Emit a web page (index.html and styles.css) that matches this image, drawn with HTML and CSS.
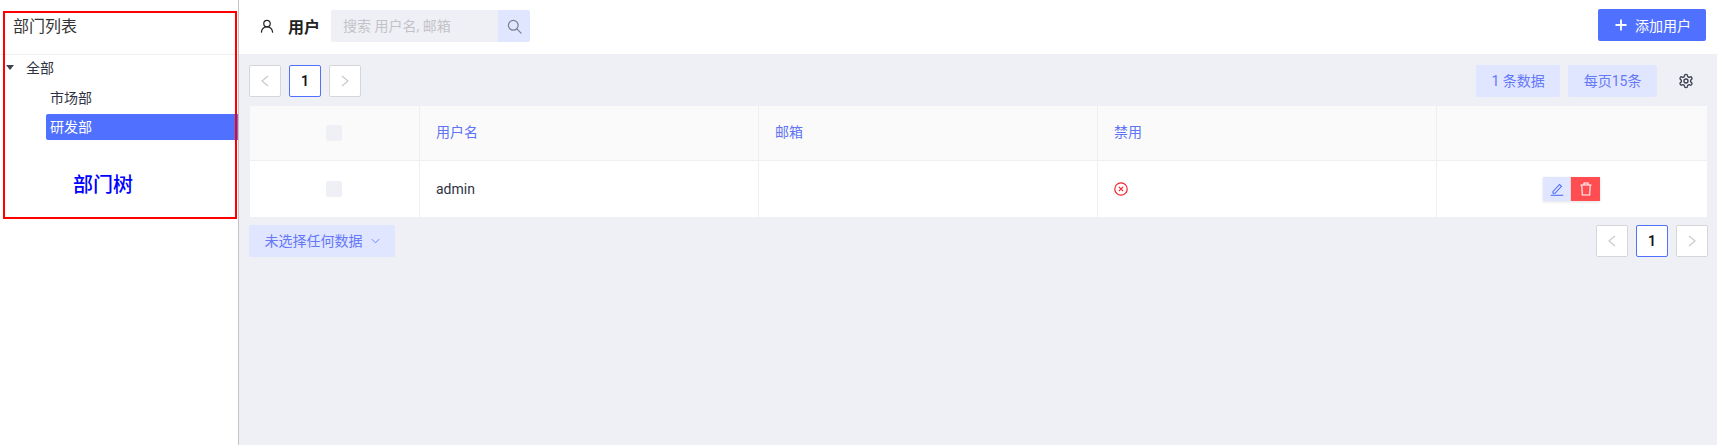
FILE: index.html
```html
<!DOCTYPE html>
<html lang="zh-CN">
<head>
  <meta charset="UTF-8">
  <title>用户</title>
  <link rel="stylesheet" href="styles.css">
</head>
<body>
  <div class="app">
    <aside class="sidebar">
      <div class="sidebar-title">部门列表</div>
      <ul class="tree">
        <li class="tree-root"><span class="tree-caret"></span>全部</li>
        <li class="tree-item">市场部</li>
        <li class="tree-item tree-item-active">研发部</li>
      </ul>
      <!-- annotation drawn on the screenshot -->
      <div class="note-box"><span class="note-text">部门树</span></div>
    </aside>

    <main class="main">
      <header class="topbar">
        <svg class="user-icon" viewBox="0 0 16 16" fill="none" stroke="#222" stroke-width="1.4" stroke-linecap="round">
          <circle cx="8" cy="5.2" r="3.7"/>
          <path d="M1.6 15c.5-3.500 3-5.900 6.400-5.900s5.900 2.400 6.400 5.900"/>
        </svg>
        <span class="page-name">用户</span>
        <div class="search">
          <span class="search-input">搜索 用户名, 邮箱</span>
          <span class="search-btn">
            <svg viewBox="0 0 16 16" width="15" height="15" fill="none" stroke="#7a7f8c" stroke-width="1.3" stroke-linecap="round">
              <circle cx="6.700" cy="6.700" r="5.200"/>
              <path d="M10.500 10.500 15 15"/>
            </svg>
          </span>
        </div>
        <button class="add-btn">
          <svg viewBox="0 0 12 12" width="12" height="12" stroke="#fff" stroke-width="1.800"><path d="M6 .5v11M.5 6h11"/></svg>
          添加用户
        </button>
      </header>

      <section class="content">
        <div class="toolbar">
          <div class="pager">
            <span class="page-btn"><svg viewBox="0 0 10 12" width="10" height="12" class="chev"><path d="M8 1 2 6l6 5"/></svg></span>
            <span class="page-btn page-btn-current">1</span>
            <span class="page-btn"><svg viewBox="0 0 10 12" width="10" height="12" class="chev"><path d="m2 1 6 5-6 5"/></svg></span>
          </div>
          <div class="toolbar-right">
            <span class="tag-btn">1 条数据</span>
            <span class="tag-btn">每页15条</span>
            <svg class="gear" viewBox="0 0 24 24" fill="none" stroke="#3d4152" stroke-width="2">
              <path d="M12.220 2h-.44a2 2 0 0 0-2 2v.18a2 2 0 0 1-1 1.730l-.43.25a2 2 0 0 1-2 0l-.15-.08a2 2 0 0 0-2.730.73l-.22.38a2 2 0 0 0 .73 2.730l.15.1a2 2 0 0 1 1 1.720v.51a2 2 0 0 1-1 1.740l-.15.09a2 2 0 0 0-.73 2.730l.22.38a2 2 0 0 0 2.730.73l.15-.08a2 2 0 0 1 2 0l.43.25a2 2 0 0 1 1 1.730V20a2 2 0 0 0 2 2h.44a2 2 0 0 0 2-2v-.18a2 2 0 0 1 1-1.730l.43-.25a2 2 0 0 1 2 0l.15.08a2 2 0 0 0 2.730-.73l.22-.39a2 2 0 0 0-.73-2.730l-.15-.08a2 2 0 0 1-1-1.740v-.5a2 2 0 0 1 1-1.740l.15-.09a2 2 0 0 0 .73-2.730l-.22-.38a2 2 0 0 0-2.730-.73l-.15.08a2 2 0 0 1-2 0l-.43-.25a2 2 0 0 1-1-1.730V4a2 2 0 0 0-2-2z"/>
              <circle cx="12" cy="12" r="3"/>
            </svg>
          </div>
        </div>

        <table class="data-table">
          <thead>
            <tr>
              <th class="col-check"><span class="checkbox"></span></th>
              <th class="col-mid">用户名</th>
              <th class="col-mid">邮箱</th>
              <th class="col-mid">禁用</th>
              <th></th>
            </tr>
          </thead>
          <tbody>
            <tr>
              <td class="col-check"><span class="checkbox"></span></td>
              <td>admin</td>
              <td></td>
              <td>
                <svg class="status-icon" viewBox="0 0 14 14" fill="none" stroke="#f5222d" stroke-width="1.200">
                  <circle cx="7" cy="7" r="6.200"/>
                  <path d="m4.900 4.900 4.200 4.200M9.100 4.900l-4.200 4.200"/>
                </svg>
              </td>
              <td class="col-actions">
                <span class="action-group">
                  <span class="action-btn action-edit">
                    <svg viewBox="0 0 14 14" width="14" height="14" fill="none" stroke="#4f6ef7" stroke-width="1.100">
                      <path d="M3 9.500 9.500 2.500l2 1.800-6.500 7H3z"/>
                      <path d="M.8 13.300h12.400"/>
                    </svg>
                  </span>
                  <span class="action-btn action-del">
                    <svg viewBox="0 0 14 14" width="14" height="14" fill="none" stroke="#fff" stroke-width="1.100">
                      <path d="M1.500 3h11M5 3V1h4v2M2.800 3l.5 10h7.400l.5-10"/>
                    </svg>
                  </span>
                </span>
              </td>
            </tr>
          </tbody>
        </table>

        <div class="toolbar toolbar-bottom">
          <span class="tag-btn select-btn">未选择任何数据
            <svg viewBox="0 0 10 6" width="9" height="6" fill="none" stroke="#6478f8" stroke-width="1"><path d="m1 1 4 4 4-4"/></svg>
          </span>
          <div class="pager">
            <span class="page-btn"><svg viewBox="0 0 10 12" width="10" height="12" class="chev"><path d="M8 1 2 6l6 5"/></svg></span>
            <span class="page-btn page-btn-current">1</span>
            <span class="page-btn"><svg viewBox="0 0 10 12" width="10" height="12" class="chev"><path d="m2 1 6 5-6 5"/></svg></span>
          </div>
        </div>
      </section>
    </main>
  </div>
</body>
</html>
```

FILE: styles.css
```css
html, body {
  height: 100%;
}
body {
  margin: 0;
  font-family: Roboto, "Noto Sans CJK SC", sans-serif;
  font-size: 14px;
  color: #303344;
  background-color: #fff;
  overflow: hidden;
}
.app {
  display: flex;
  height: 100vh;
}

/* left tree */
.sidebar {
  position: relative;
  width: 238px;
  flex-shrink: 0;
  border-right: 1px solid #c4c4c8;
}
.sidebar-title {
  height: 55px;
  box-sizing: border-box;
  padding: 16px 0 0 13px;
  font-size: 16px;
  line-height: 22px;
  color: #333;
  border-bottom: 1px solid #eeeff2;
}
.tree {
  list-style: none;
  margin: 0;
  padding: 0;
}
.tree-root {
  position: relative;
  height: 27px;
  padding-left: 26px;
  line-height: 26px;
}
.tree-caret {
  position: absolute;
  left: 6px;
  top: 10px;
  border-left: 4px solid transparent;
  border-right: 4px solid transparent;
  border-top: 5px solid #3d4152;
}
.tree-item {
  height: 26px;
  margin: 3px 0 3px 46px;
  padding-left: 4px;
  line-height: 26px;
}
.tree-item-active {
  background-color: #5070ff;
  color: #fff;
  border-radius: 2px 0 0 2px;
}
.note-box {
  position: absolute;
  left: 3px;
  top: 11px;
  width: 230px;
  height: 204px;
  border: 2px solid #f00;
}
.note-text {
  position: absolute;
  left: 68px;
  top: 158px;
  font-size: 20px;
  line-height: 28px;
  font-weight: 500;
  color: #00f;
}

/* right side */
.main {
  flex: 1;
  min-width: 0;
  background-color: #eff0f5;
}
.topbar {
  display: flex;
  align-items: center;
  height: 54px;
  box-sizing: border-box;
  padding: 0 11px 2px 21px;
  background-color: #fff;
}
.user-icon {
  width: 14px;
  height: 14px;
}
.page-name {
  margin-left: 14px;
  font-size: 16px;
  font-weight: 700;
  color: #222;
}
.search {
  display: flex;
  margin-left: 11px;
  height: 32px;
}
.search-input {
  width: 155px;
  padding-left: 12px;
  line-height: 32px;
  color: #c2c3c8;
  background-color: #eff0f5;
  border-radius: 2px 0 0 2px;
}
.search-btn {
  display: flex;
  align-items: center;
  justify-content: center;
  width: 32px;
  background-color: #e0e6ff;
  border-radius: 0 2px 2px 0;
}
.add-btn {
  display: flex;
  align-items: center;
  gap: 8px;
  margin: 0 0 2px auto;
  height: 32px;
  width: 108px;
  padding: 0 0 0 17px;
  border: none;
  border-radius: 2px;
  background-color: #5070ff;
  color: #fff;
  font-family: inherit;
  font-size: 14px;
}
.content {
  padding: 11px 9px 0 10px;
}
.toolbar {
  display: flex;
  align-items: center;
  justify-content: space-between;
}
.toolbar-right {
  display: flex;
  align-items: center;
  gap: 8px;
  margin-right: 1px;
}
.toolbar-bottom {
  margin-top: 8px;
}
.pager {
  display: flex;
  gap: 8px;
}
.page-btn {
  display: flex;
  align-items: center;
  justify-content: center;
  box-sizing: border-box;
  width: 32px;
  height: 32px;
  background-color: #fff;
  border: 1px solid #d6d6d8;
  border-radius: 2px;
  font-weight: 600;
  color: #111;
}
.page-btn-current {
  border-color: #5070ff;
}
.chev {
  fill: none;
  stroke: #c8c8cc;
  stroke-width: 1.100;
}
.tag-btn {
  display: inline-block;
  height: 32px;
  padding: 0 15.500px;
  line-height: 32px;
  background-color: #e0e6ff;
  color: #6478f8;
  border-radius: 2px;
}
.gear {
  width: 16px;
  height: 16px;
  margin: 0 13px;
}
.select-btn svg {
  margin-left: 5px;
  vertical-align: 2px;
}

/* table */
.data-table {
  width: 1457px;
  margin: 9px 0 0 1px;
  border-collapse: collapse;
  table-layout: fixed;
  background-color: #fff;
}
.data-table th, .data-table td {
  padding: 0 0 0 16px;
  text-align: left;
  border-right: 1px solid #eeeff2;
  border-bottom: 1px solid #eeeff2;
}
.data-table th:last-child, .data-table td:last-child {
  border-right: none;
}
.data-table tbody td {
  height: 56px;
  border-bottom: none;
}
.data-table thead th {
  height: 54px;
  background-color: #fafafa;
  color: #5f73f5;
  font-weight: 400;
}
.data-table .col-check {
  width: 169px;
  padding: 0;
}
.data-table .col-mid {
  width: 339px;
  box-sizing: border-box;
  padding-bottom: 4px;
}
.checkbox {
  display: block;
  width: 16px;
  height: 16px;
  margin-left: 76px;
  background-color: #eff0f5;
  border-radius: 2px;
}
.status-icon {
  display: block;
  width: 14px;
  height: 14px;
}
.data-table .col-actions {
  padding: 0 0 0 106px;
}
.action-group {
  display: inline-flex;
  vertical-align: middle;
  box-shadow: 0 1px 3px rgba(0, 0, 0, 0.12);
}
.action-btn {
  display: flex;
  align-items: center;
  justify-content: center;
  height: 24px;
}
.action-edit {
  width: 27px;
  background-color: #e0e6ff;
}
.action-del {
  width: 29px;
  border-left: 1px solid #d8d8dc;
  background-color: #ff4d52;
}
```
